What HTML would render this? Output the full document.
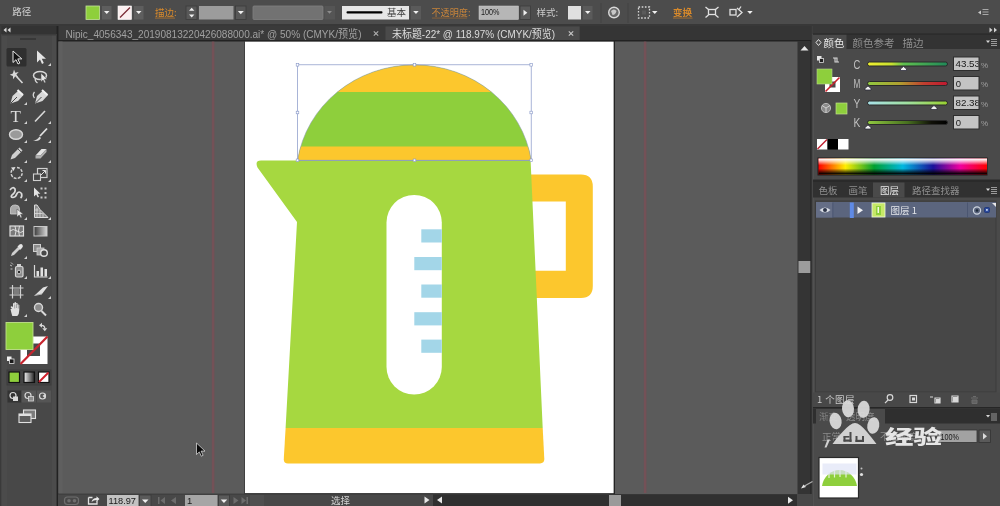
<!DOCTYPE html>
<html lang="zh-CN">
<head>
<meta charset="utf-8">
<title>Illustrator</title>
<style>
html,body{margin:0;padding:0;background:#4b4b4b;}
body{width:1000px;height:506px;overflow:hidden;position:relative;}
svg{position:absolute;left:0;top:0;display:block;will-change:transform;}
text{font-family:"Liberation Sans","Noto Sans CJK SC",sans-serif;font-size:11px;fill:#d6d6d6;}
.cj{font-family:"Noto Sans CJK SC","Liberation Sans",sans-serif;}
.or{fill:#d98a2b;}
.dk{fill:#1a1a1a;}
</style>
</head>
<body>
<svg width="1000" height="506" viewBox="0 0 1000 506">
<defs>
<linearGradient id="spec" x1="0" x2="1" y1="0" y2="0">
<stop offset="0" stop-color="#ff0000"/><stop offset="0.16" stop-color="#ffee00"/><stop offset="0.33" stop-color="#00a030"/><stop offset="0.5" stop-color="#00b8e0"/><stop offset="0.68" stop-color="#1a109a"/><stop offset="0.84" stop-color="#f000a0"/><stop offset="1" stop-color="#ff0000"/>
</linearGradient>
<linearGradient id="specv" x1="0" x2="0" y1="0" y2="1">
<stop offset="0" stop-color="#fff" stop-opacity="1"/><stop offset="0.08" stop-color="#fff" stop-opacity="0.9"/><stop offset="0.42" stop-color="#fff" stop-opacity="0"/><stop offset="0.62" stop-color="#000" stop-opacity="0"/><stop offset="0.95" stop-color="#000" stop-opacity="0.95"/><stop offset="1" stop-color="#000" stop-opacity="1"/>
</linearGradient>
</defs>
<!-- BASE -->
<g id="base">
<rect x="0" y="0" width="1000" height="506" fill="#4b4b4b"/>
<!-- canvas -->
<rect x="58" y="41" width="740" height="453" fill="#5b5b5b"/>
<!-- control bar -->
<rect x="0" y="0" width="1000" height="26" fill="#4c4c4c"/>
<!-- doc tab bar -->
<rect x="57" y="26" width="755" height="15" fill="#3a3a3a"/>
<rect x="385.5" y="26.5" width="194" height="14" fill="#4a4a4a"/><rect x="580" y="26" width="232" height="15" fill="#353535"/>
<rect x="57" y="40" width="755" height="1.5" fill="#222"/>
<!-- toolbar -->
<rect x="0" y="26" width="57" height="480" fill="#484848"/>
<rect x="0" y="26" width="57" height="8" fill="#333"/>
<rect x="52" y="35" width="5" height="471" fill="#4c4c4c"/><rect x="56.6" y="26" width="1.8" height="480" fill="#222"/><rect x="58.4" y="41.5" width="4.2" height="452" fill="#5f5f5f"/>
<!-- artboard -->
<rect x="244.6" y="41.2" width="369.6" height="452.4" fill="#fff" stroke="#2a2a2a" stroke-width="0.8"/><rect x="613.8" y="41" width="1" height="453" fill="#1c1c1c"/>
<!-- guides -->
<rect x="211.8" y="41.5" width="2.6" height="451.5" fill="#7c4e55" opacity="0.75"/>
<rect x="643.8" y="41.5" width="2.6" height="451.5" fill="#7c4e55" opacity="0.75"/>
<!-- status bar -->
<rect x="58" y="494" width="754" height="12" fill="#484848"/>
<rect x="433" y="494.3" width="364" height="11.7" fill="#303030"/>
<rect x="609" y="495" width="12" height="11" fill="#9a9a9a"/>
<!-- v scroll -->
<rect x="797.5" y="41" width="13" height="453" fill="#343434"/><rect x="810.3" y="41" width="1.5" height="453" fill="#242424"/>
<rect x="798.5" y="261" width="11.8" height="12" fill="#9c9c9c"/>
<!-- right dock -->
<rect x="812" y="26" width="188" height="480" fill="#4a4a4a"/>
<rect x="811.5" y="26" width="1.2" height="480" fill="#3a3a3a"/><rect x="812.6" y="34" width="1" height="472" fill="#565656"/>
</g>
<!-- KETTLE -->
<g id="kettle">
<path d="M520 174.5 H581 Q592.8 174.5 592.8 186.5 V286 Q592.8 298 581 298 H520 V270.8 H565.8 V201.5 H520 Z" fill="#fcc72d"/>
<path d="M261 160.5 H530.6 L542.7 428 H285.6 L297 222 L257.5 167.5 Q254.5 160.5 261 160.5 Z" fill="#a6d840"/>
<path d="M285.6 428 H542.7 L544.3 459 Q544.5 463.5 540 463.5 H288 Q283.6 463.5 283.8 459 Z" fill="#fcc72d"/>
<rect x="386.5" y="195" width="55.3" height="199.6" rx="27.6" fill="#fff"/>
<g fill="#a3d6e8">
<rect x="421.3" y="229.3" width="20.5" height="13.2"/>
<rect x="414.3" y="257" width="27.5" height="13.2"/>
<rect x="421.3" y="284.5" width="20.5" height="13.2"/>
<rect x="414.3" y="312.2" width="27.5" height="13.2"/>
<rect x="421.3" y="339.6" width="20.5" height="13.2"/>
</g>
<clipPath id="dome"><path d="M297.6 160.3 A118.1 112 0 0 1 531.2 160.3 Z"/></clipPath>
<g clip-path="url(#dome)">
<rect x="290" y="60" width="250" height="101" fill="#8ecf3c"/>
<rect x="290" y="60" width="250" height="32" fill="#fcc72d"/>
<rect x="290" y="146.5" width="250" height="14" fill="#fcc72d"/>
</g>
<path d="M297.6 160.3 A118.1 112 0 0 1 531.2 160.3 Z" fill="none" stroke="#8a9ab0" stroke-width="0.8" opacity="0.7"/>
<rect x="297.5" y="64.8" width="233.7" height="95.6" fill="none" stroke="#8494c6" stroke-width="0.7"/>
<g fill="#fff" stroke="#8494c6" stroke-width="0.6" transform="translate(0.2 0.2)">
<rect x="296" y="63.3" width="2.6" height="2.6"/><rect x="413" y="63.3" width="2.6" height="2.6"/><rect x="529.7" y="63.3" width="2.6" height="2.6"/>
<rect x="296" y="111" width="2.6" height="2.6"/><rect x="529.7" y="111" width="2.6" height="2.6"/>
<rect x="296" y="158.8" width="2.6" height="2.6"/><rect x="413" y="158.8" width="2.6" height="2.6"/><rect x="529.7" y="158.8" width="2.6" height="2.6"/>
</g>
</g>
<!--TOOLBAR-->
<g id="toolbar">
<rect x="0" y="26" width="1.500" height="480" fill="#3a3a3a"/><rect x="1.500" y="35" width="5.500" height="471" fill="#4b4b4b"/>
<path d="M6.500 27.500 l-3 2.500 l3 2.500z M10.500 27.500 l-3 2.500 l3 2.500z" fill="#d8d8d8"/>
<rect x="2" y="34" width="55" height="1.500" fill="#3c3c3c"/>
<rect x="20" y="38" width="16" height="2" fill="#383838"/>
<!-- selected tool bg -->
<rect x="6.500" y="48" width="20" height="18.500" rx="1.500" fill="#2f2f2f"/>
<!-- flyout triangles -->
<g fill="#d0d0d0">
<path d="M51 63 v3 h-3z"/>
<path d="M27 102 v3 h-3z"/><path d="M27 121 v3 h-3z M51 121 v3 h-3z"/>
<path d="M27 140 v3 h-3z M51 140 v3 h-3z"/>
<path d="M27 160 v3 h-3z M51 160 v3 h-3z"/>
<path d="M27 179 v3 h-3z M51 179 v3 h-3z"/>
<path d="M27 198 v3 h-3z"/>
<path d="M27 217 v3 h-3z M51 217 v3 h-3z"/>
<path d="M27 256 v3 h-3z"/>
<path d="M27 276 v3 h-3z M51 276 v3 h-3z"/>
<path d="M51 296 v3 h-3z"/>
<path d="M27 314 v3 h-3z"/>
</g>
<!-- row1: selection / direct selection -->
<path d="M13 51 v11.500 l3 -2.800 l2 4.300 l1.800 -0.900 l-2 -4.200 h4z" fill="#111" stroke="#e8e8e8" stroke-width="1"/>
<path d="M37 50.500 v12 l3 -3 l2 4.500 l1.800 -0.900 l-2 -4.400 h4.200z" fill="#e4e4e4"/>
<!-- row2: magic wand / lasso -->
<path d="M14 69.500 l1.300 3.200 l3.400 -0.700 l-2.300 2.600 l2 2.800 l-3.300 -0.800 l-2 2.700 l-0.200 -3.400 l-3.200 -1.200 l3.200 -1.300z" fill="#d8d8d8"/>
<path d="M16.500 76.500 l6 6.500" stroke="#d8d8d8" stroke-width="1.600"/>
<ellipse cx="40" cy="75.500" rx="6.500" ry="4" fill="none" stroke="#d8d8d8" stroke-width="1.500"/>
<path d="M35.500 78 q-1 3 2 5" fill="none" stroke="#d8d8d8" stroke-width="1.300"/>
<path d="M41 73 v9 l2 -2 l1.500 3 l1.300 -0.700 l-1.400 -3 h2.800z" fill="#e4e4e4" stroke="#484848" stroke-width="0.500"/>
<!-- row3: pen / curvature -->
<path d="M10.500 103.500 l2 -7.500 l6 -5.500 l5 4.500 l-5.500 6z" fill="#d8d8d8"/>
<path d="M11 103 l6 -6" stroke="#484848" stroke-width="1"/>
<path d="M17.500 90 l5.500 5" stroke="#f0f0f0" stroke-width="2"/>
<path d="M35 103.500 l2 -7.500 l6 -5.500 l5 4.500 l-5.500 6z" fill="#d8d8d8"/>
<path d="M35.500 103 l6 -6" stroke="#484848" stroke-width="1"/>
<path d="M42 90 l5.500 5" stroke="#f0f0f0" stroke-width="2"/>
<path d="M34.500 92 q-2.500 3 0 6" fill="none" stroke="#d8d8d8" stroke-width="1.300"/>
<!-- row4: T / line -->
<text x="10.500" y="121.500" style="font-family:'Liberation Serif',serif;font-size:17px;fill:#dcdcdc">T</text>
<path d="M35 121.500 l10 -10.500" stroke="#d8d8d8" stroke-width="1.600"/>
<!-- row5: ellipse / brush -->
<ellipse cx="16" cy="134.500" rx="6.500" ry="4.700" fill="#9a9a9a" stroke="#d8d8d8" stroke-width="1.400"/>
<path d="M47 128.500 l-7 7.500" stroke="#e0e0e0" stroke-width="1.800"/>
<path d="M33 140.500 q4 0 6.500 -4 l1.500 1.500 q-2 4 -8 2.500z" fill="#d8d8d8"/>
<!-- row6: pencil / eraser -->
<path d="M10.500 159.500 l1.500 -4.500 l7.500 -7.500 l3 3 l-7.500 7.500z" fill="#d0d0d0"/>
<path d="M18 149 l3 3" stroke="#484848" stroke-width="0.900"/>
<path d="M35.500 155.500 l6 -6.500 h5 l-6 6.500z" fill="#e4e4e4"/>
<path d="M35.500 155.500 h5 v3 h-5z M40.500 155.500 l6 -6.500 v3 l-6 6.500z" fill="#b0b0b0"/>
<!-- row7: rotate / scale -->
<path d="M12 170 a5.500 5.500 0 1 0 5 -2.500" fill="none" stroke="#d0d0d0" stroke-width="1.500" stroke-dasharray="3 1.200"/>
<path d="M11 167.500 l4.500 -0.500 l-2 4z" fill="#e0e0e0"/>
<rect x="37.500" y="168.500" width="9.500" height="9" fill="none" stroke="#d0d0d0" stroke-width="1.200"/>
<rect x="33.500" y="174" width="7" height="6.500" fill="#484848" stroke="#d0d0d0" stroke-width="1.100"/>
<path d="M41 175 l4.500 -4.500 m-3 0 h3 v3" stroke="#e0e0e0" stroke-width="1" fill="none"/>
<!-- row8: width/warp / free transform -->
<path d="M10 190 q3 -4 5 -1 q1 3 -3 6 q-2 2 1 2.500 q3 -0.500 4 -4 q2 -3 4.500 0 q1 3 -1 4.500" fill="none" stroke="#dcdcdc" stroke-width="1.700"/>
<path d="M34 187.500 v9 l2.200 -2 l1.500 3 l1.300 -0.700 l-1.400 -3 h2.800z" fill="#e4e4e4"/>
<g fill="#c8c8c8"><rect x="40.500" y="187.500" width="2" height="2"/><rect x="44.500" y="187.500" width="2" height="2"/><rect x="44.500" y="192" width="2" height="2"/><rect x="44.500" y="196.500" width="2" height="2"/><rect x="40.500" y="196.500" width="2" height="2"/></g>
<!-- row9: shape builder / perspective grid -->
<path d="M10.500 209 q0 -4 5 -4 q4 0 4 4 v5 h-9z" fill="#a8a8a8" stroke="#d0d0d0" stroke-width="0.800"/>
<path d="M17 209 v8 l2.200 -2 l1.500 3 l1.300 -0.700 l-1.400 -3 h2.800z" fill="#e8e8e8" stroke="#484848" stroke-width="0.500"/>
<path d="M34.500 205 v12.500 h13.500 l-8 -8 l-3 -4.500z" fill="#8c8c8c" stroke="#dcdcdc" stroke-width="1"/>
<path d="M37 208 v9 M40 210 v7 M43 213 v4 M34.500 210 h4 M34.500 213.500 h8" stroke="#dcdcdc" stroke-width="0.800"/>
<!-- row10: mesh / gradient -->
<rect x="10" y="226" width="13.500" height="10" fill="#7a7a7a" stroke="#dcdcdc" stroke-width="1.200"/>
<path d="M10 231 q3 -3 7 0 t6.500 0 M15 226 q2 5 0 10 M19.500 226 q-2 5 0 10" stroke="#e8e8e8" stroke-width="0.900" fill="none"/>
<linearGradient id="tg" x1="0" x2="1"><stop offset="0" stop-color="#3a3a3a"/><stop offset="1" stop-color="#d8d8d8"/></linearGradient>
<rect x="34" y="226.500" width="13" height="9.500" fill="url(#tg)" stroke="#c8c8c8" stroke-width="1"/>
<!-- row11: eyedropper / blend -->
<path d="M11 256 l1 -3 l6 -6 l2 2 l-6 6z" fill="#d0d0d0"/>
<path d="M17.500 246.500 l2 -2 q2 -1 3 0.500 q1 1.500 -0.500 3 l-2 2z" fill="#e4e4e4"/>
<rect x="33.500" y="244.500" width="7" height="7" fill="#8c8c8c" stroke="#d0d0d0" stroke-width="1"/>
<rect x="37" y="248" width="7" height="7" fill="#a8a8a8" stroke="#d0d0d0" stroke-width="0.800"/>
<circle cx="44" cy="253" r="3.300" fill="#484848" stroke="#e0e0e0" stroke-width="1.400"/>
<!-- row12: symbol sprayer / graph -->
<rect x="15.500" y="266.500" width="7.500" height="10.500" rx="1.500" fill="#8c8c8c" stroke="#d8d8d8" stroke-width="1.200"/>
<rect x="17" y="264" width="4" height="2.500" fill="#d0d0d0"/>
<circle cx="19" cy="272" r="1.800" fill="#2c2c2c" stroke="#e0e0e0" stroke-width="0.800"/>
<path d="M10 265 l2 1 M10.500 269 h2 M11 262.500 l2 2" stroke="#c0c0c0" stroke-width="1"/>
<path d="M34.500 265 v12 h13" fill="none" stroke="#d8d8d8" stroke-width="1.200"/>
<rect x="36.500" y="271" width="2.500" height="5.500" fill="#e0e0e0"/><rect x="40.500" y="267.500" width="2.500" height="9" fill="#e0e0e0"/><rect x="44.500" y="269" width="2.500" height="7.500" fill="#e0e0e0"/>
<!-- row13: artboard / slice -->
<path d="M9.500 288 h14 M9.500 295 h14 M12.500 285 v13.500 M20.500 285 v13.500" stroke="#d0d0d0" stroke-width="1.200" fill="none"/>
<rect x="13.500" y="289" width="6" height="5" fill="#7c7c7c"/>
<path d="M34.500 295.500 l8.500 -8 l5 -1.500 l-6 8z" fill="#e0e0e0"/>
<path d="M34.500 295.500 l7.500 -1.500" stroke="#b0b0b0" stroke-width="1"/>
<!-- row14: hand / zoom -->
<path d="M12 309 l-1.500 -2 q1 -1.500 2.500 0 v-3.500 q0.800 -1 1.500 0 v-1 q0.800 -1 1.600 0 v1 q0.800 -1 1.600 0 v1.500 q0.800 -1 1.600 0 v5 q0 4 -2 6 h-5 q-1 -3 -1.800 -7z" fill="#e0e0e0"/>
<path d="M14.700 304.500 v4 M16.500 304 v4 M18.300 304.500 v4" stroke="#7a7a7a" stroke-width="0.600"/>
<circle cx="38.500" cy="307.500" r="4" fill="#8c8c8c" stroke="#d8d8d8" stroke-width="1.400"/>
<path d="M41.500 311 l4.500 4.500" stroke="#d8d8d8" stroke-width="2"/>
<!-- fill/stroke -->
<rect x="20.500" y="336.500" width="27" height="27.500" fill="#fff"/>
<rect x="33" y="344" width="6.500" height="11" fill="#484848"/>
<rect x="27" y="343.500" width="13" height="12.500" fill="#484848"/>
<path d="M20.500 364 L47.500 336.500" stroke="#c8242e" stroke-width="2.200"/>
<rect x="6" y="322.500" width="27" height="27" fill="#8ecf3c" stroke="#bfe08a" stroke-width="0.900"/>
<path d="M41.500 325.300 q3.300 0 3.300 3.300" fill="none" stroke="#d8d8d8" stroke-width="1.300"/><path d="M42 322.800 v5 l-3 -2.500z M42.300 328.300 h5 l-2.500 3z" fill="#d8d8d8"/>
<rect x="7" y="356.500" width="4.500" height="4.500" fill="#f0f0f0"/>
<rect x="9.500" y="359" width="4.500" height="4.500" fill="#1a1a1a" stroke="#e0e0e0" stroke-width="0.800"/>
<!-- color mode buttons -->
<rect x="7" y="370" width="44" height="15" fill="#444" stroke="#3a3a3a" stroke-width="0.800"/>
<rect x="9" y="372" width="10.500" height="10.500" fill="#8ecf3c" stroke="#111" stroke-width="1.200"/>
<linearGradient id="bw" x1="0" x2="1"><stop offset="0" stop-color="#f4f4f4"/><stop offset="1" stop-color="#222"/></linearGradient>
<rect x="24" y="372" width="10.500" height="10.500" fill="url(#bw)" stroke="#111" stroke-width="1.200"/>
<rect x="38.500" y="372" width="10.500" height="10.500" fill="#fff" stroke="#111" stroke-width="1.200"/>
<path d="M39 382 L48.500 372.500" stroke="#d0202c" stroke-width="2"/>
<!-- draw modes -->
<rect x="7.500" y="390.500" width="14" height="12" fill="#333"/>
<rect x="21.500" y="390.500" width="29.500" height="12" fill="#555"/>
<rect x="36" y="390.500" width="0.800" height="12" fill="#444"/>
<g fill="none" stroke="#d8d8d8" stroke-width="1.200">
<circle cx="13" cy="395.500" r="3"/><circle cx="28" cy="395.500" r="3"/><circle cx="42.500" cy="396" r="3"/>
</g>
<rect x="13" y="396.500" width="5" height="4.500" fill="#d8d8d8"/>
<rect x="28.500" y="396.500" width="5" height="4.500" fill="#8c8c8c" stroke="#d8d8d8" stroke-width="0.800"/>
<path d="M42.500 396 l3 -2.500 v5z" fill="#d8d8d8"/>
<!-- screen mode -->
<rect x="23.500" y="410" width="12" height="8.500" fill="#7c7c7c" stroke="#e0e0e0" stroke-width="1.100"/>
<rect x="19" y="414" width="12" height="8.500" fill="#5c5c5c" stroke="#e0e0e0" stroke-width="1.100"/>
<rect x="19" y="414" width="12" height="2" fill="#e0e0e0"/>
</g>
<!--/TOOLBAR-->
<!--CONTROL-->
<g id="control">
<rect x="0" y="24" width="1000" height="2" fill="#383838"/>
<text x="12.3" y="14.8" class="cj" style="font-size:9.5px;fill:#d0d0d0">路径</text>
<!-- fill swatch -->
<rect x="86" y="6" width="13.500" height="13.500" fill="#8ecf3c" stroke="#c4e49a" stroke-width="0.800"/>
<rect x="102" y="6" width="9.500" height="13.500" fill="#5e5e5e"/>
<path d="M104 11 h5.500 l-2.750 3z" fill="#f0f0f0"/>
<!-- stroke swatch -->
<rect x="118" y="6" width="13.500" height="13.500" fill="#fbeff0" stroke="#fff" stroke-width="0.600"/>
<path d="M120 17.500 L130 7.500" stroke="#7a2a34" stroke-width="1.200"/>
<rect x="134" y="6" width="9.500" height="13.500" fill="#5e5e5e"/>
<path d="M136 11 h5.500 l-2.750 3z" fill="#f0f0f0"/>
<text x="155" y="15.8" class="cj or" style="font-size:9.5px">描边:</text>
<rect x="155" y="17.6" width="20" height="0.900" fill="#a87030"/>
<!-- spinner -->
<rect x="186" y="6" width="11" height="13.500" fill="#585858" stroke="#3c3c3c" stroke-width="0.800"/>
<path d="M189 10.800 l2.700 -3 l2.700 3z M189 14.500 l2.700 3 l2.700 -3z" fill="#f0f0f0"/>
<rect x="199" y="6" width="34.500" height="13.500" fill="#9c9c9c"/>
<rect x="235.500" y="6" width="10.500" height="13.500" fill="#585858" stroke="#3c3c3c" stroke-width="0.800"/>
<path d="M237.800 11 h6 l-3 3.200z" fill="#f0f0f0"/>
<!-- profile -->
<rect x="253" y="6" width="70" height="13.500" rx="1" fill="#727272" stroke="#808080" stroke-width="0.800"/>
<rect x="324.500" y="6" width="10.500" height="13.500" fill="#555"/>
<path d="M327 11 h5 l-2.500 2.800z" fill="#8c8c8c"/>
<!-- stroke style -->
<rect x="342" y="6" width="67" height="13.500" fill="#e6e6e6"/>
<rect x="346.500" y="11.200" width="36" height="2.200" rx="1" fill="#000"/>
<text x="387" y="15.8" class="cj" style="font-size:9.5px;fill:#3a3a3a">基本</text>
<rect x="411" y="6" width="10" height="13.500" fill="#5a5a5a"/>
<path d="M413.200 11 h5.500 l-2.750 3z" fill="#f0f0f0"/>
<text x="431.5" y="15.8" class="cj" style="font-size:9.5px;fill:#c8843a" textLength="39" lengthAdjust="spacingAndGlyphs">不透明度:</text>
<rect x="432" y="17.6" width="35" height="0.900" fill="#8c6238"/>
<rect x="479" y="6" width="39.500" height="13.500" fill="#b6b6b6" stroke="#d0d0d0" stroke-width="0.500"/>
<text x="481" y="15.2" class="dk" style="font-size:9.5px" textLength="18.5" lengthAdjust="spacingAndGlyphs">100%</text>
<rect x="520" y="6" width="10.500" height="13.500" fill="#5a5a5a" stroke="#3c3c3c" stroke-width="0.800"/>
<path d="M523.500 9.800 l3.800 3 l-3.800 3z" fill="#f0f0f0"/>
<text x="536.5" y="15.8" class="cj" style="font-size:9.5px;fill:#cacaca">样式:</text>
<rect x="568" y="6" width="13" height="13.500" fill="#e0e0e0"/>
<rect x="583" y="6" width="9.500" height="13.500" fill="#5a5a5a"/>
<path d="M585 11 h5.500 l-2.750 3z" fill="#f0f0f0"/>
<rect x="600.500" y="3" width="1" height="20" fill="#424242"/>
<circle cx="614" cy="12.500" r="5.300" fill="#6a6a6a" stroke="#d8d8d8" stroke-width="1.400"/>
<path d="M611 11 q3 -3 5.500 0 q-1 4 -4 4z" fill="#c8c8c8"/>
<rect x="627.500" y="3" width="1" height="20" fill="#424242"/>
<rect x="638.500" y="7" width="11" height="11" fill="none" stroke="#d8d8d8" stroke-width="1.300" stroke-dasharray="1.600 1.600"/>
<rect x="642" y="10.500" width="4" height="4" fill="#5a5a5a"/>
<path d="M652 11 h5.500 l-2.750 3z" fill="#f0f0f0"/>
<text x="673" y="15.8" class="cj or" style="font-size:9.5px;font-weight:bold">变换</text>
<rect x="673" y="17.6" width="19.5" height="0.900" fill="#a87030"/>
<g stroke="#e0e0e0" stroke-width="1.300" fill="none">
<rect x="708.500" y="9.500" width="7" height="5"/>
<path d="M705.500 7 l3 2.500 M718.500 7 l-3 2.500 M705.500 17.500 l3 -2.500 M718.500 17.500 l-3 -2.500"/>
<rect x="730" y="9.500" width="6" height="5.500"/>
<path d="M737 8 l5 4.500 l-5 4.500 M741 6.500 l-2 3"/>
</g>
<path d="M747.200 11 h5.500 l-2.750 3z" fill="#f0f0f0"/>
<path d="M978 12.500 l3 -2 v4z" fill="#c8c8c8"/><path d="M982.500 9.500h6M982.500 12h6M982.500 14.500h6" stroke="#a8a8a8" stroke-width="1"/>
</g>
<!--/CONTROL-->
<!--TABS-->
<g id="tabs">
<text x="65.500" y="38" style="font-size:11px;fill:#a0a0a0" textLength="296" lengthAdjust="spacingAndGlyphs">Nipic_4056343_20190813220426088000.ai* @ 50% (CMYK/<tspan class="cj">预览</tspan>)</text>
<path d="M373.800 31.300 l4.400 4.400 M378.200 31.300 l-4.400 4.400" stroke="#b0b0b0" stroke-width="1.100"/>
<text x="392" y="38" style="font-size:11px;fill:#dcdcdc" textLength="163" lengthAdjust="spacingAndGlyphs"><tspan class="cj">未标题</tspan>-22* @ 118.97% (CMYK/<tspan class="cj">预览</tspan>)</text>
<path d="M568.800 31.300 l4.400 4.400 M573.200 31.300 l-4.400 4.400" stroke="#c8c8c8" stroke-width="1.100"/>
</g>
<!--/TABS-->
<!--STATUS-->
<g id="status">
<rect x="58" y="493.6" width="375" height="1" fill="#3c3c3c"/>
<rect x="64.500" y="497" width="14" height="7.500" rx="3" fill="none" stroke="#6e6e6e" stroke-width="1.200"/>
<circle cx="69" cy="500.800" r="1.800" fill="#6e6e6e"/><circle cx="74.500" cy="500.800" r="1.800" fill="#6e6e6e"/>
<path d="M88.500 497.500 h4 M88.500 497.500 v6.500 h8.500 v-3" stroke="#e0e0e0" stroke-width="1.300" fill="none"/>
<path d="M91.500 502 q1 -4 5 -4 v-1.800 l3 2.800 l-3 2.800 v-1.800 q-3 0 -5 2z" fill="#e8e8e8"/>
<rect x="107" y="495" width="31.500" height="11.5" fill="#c2c2c2"/>
<text x="108.5" y="504" class="dk" style="font-size:9.5px" textLength="27.5" lengthAdjust="spacingAndGlyphs">118.97</text>
<rect x="139.500" y="495" width="11.500" height="11.5" fill="#5a5a5a" stroke="#3a3a3a" stroke-width="0.800"/>
<path d="M142 499.500 h6.500 l-3.250 3.500z" fill="#f0f0f0"/>
<g fill="#6c6c6c">
<rect x="158" y="497" width="1.500" height="7"/><path d="M165 497 v7 l-4.500 -3.500z"/>
<path d="M176 497 v7 l-5 -3.500z"/>
<path d="M233.500 497 v7 l5 -3.500z"/>
<path d="M241.500 497 v7 l4.500 -3.500z"/><rect x="246.500" y="497" width="1.500" height="7"/>
</g>
<rect x="185" y="495" width="32.500" height="11.5" fill="#a6a6a6"/>
<text x="187" y="504" class="dk" style="font-size:9.5px">1</text>
<rect x="218.500" y="495" width="11" height="11.5" fill="#5a5a5a" stroke="#3a3a3a" stroke-width="0.800"/>
<path d="M220.700 499.500 h6.500 l-3.250 3.500z" fill="#f0f0f0"/>
<rect x="250" y="495" width="14" height="11.5" fill="#4f4f4f"/>
<text x="331" y="504" class="cj" style="font-size:9.5px;fill:#d4d4d4">选择</text>
<path d="M424.500 496.500 v7 l5 -3.500z" fill="#e8e8e8"/>
<path d="M442 496.500 v7 l-5 -3.500z" fill="#e8e8e8"/>
<path d="M800.500 50.5 l4 -4.500 l4 4.500z" fill="#e8e8e8"/>
<path d="M788 496.800 v7 l5 -3.500z" fill="#e8e8e8"/>
<rect x="797.500" y="494" width="14.500" height="12" fill="#484848"/>
</g>
<!--/STATUS-->
<!--PANELS-->
<g id="panels">
<!-- dock header -->
<rect x="813" y="26" width="187" height="8" fill="#383838"/>
<path d="M989.5 27.5 l3 2.5 l-3 2.5z M994 27.5 l3 2.5 l-3 2.5z" fill="#d0d0d0"/>
<!-- color panel -->
<rect x="813" y="34" width="187" height="15" fill="#333"/>
<rect x="813" y="34.5" width="33.5" height="15" fill="#4a4a4a"/>
<rect x="813" y="33.5" width="187" height="1" fill="#262626"/>
<path d="M818.5 39.5 l2.5 3 l-2.500 3 l-2.500 -3z" fill="none" stroke="#e0e0e0" stroke-width="1"/>
<text x="823.5" y="46.5" class="cj" style="font-size:10.5px;fill:#e8e8e8">颜色</text>
<text x="852.5" y="46.5" class="cj" style="font-size:10.5px;fill:#8f8f8f">颜色参考</text>
<text x="902.5" y="46.5" class="cj" style="font-size:10.5px;fill:#8f8f8f">描边</text>
<path d="M986 40.500 h4 l-2 2.500z" fill="#d8d8d8"/><path d="M991 39.5h6M991 41.500h6M991 43.500h6M991 45.5h6" stroke="#9a9a9a" stroke-width="1"/>
<!-- small icons -->
<rect x="817" y="56" width="4.500" height="4.500" fill="#e8e8e8"/><rect x="819.5" y="58.500" width="4" height="4" fill="#222" stroke="#ddd" stroke-width="0.800"/>
<path d="M833 58 h4 v4 M839 62 h-4 v-4" fill="none" stroke="#d8d8d8" stroke-width="1.100"/>
<!-- fill/stroke -->
<rect x="825" y="77" width="15" height="15" fill="#fff"/>
<rect x="829.5" y="81.500" width="6" height="6" fill="#4a4a4a"/>
<path d="M825.500 91.500 L839.500 77.500" stroke="#c8202a" stroke-width="1.600"/>
<rect x="817" y="69" width="15" height="15" fill="#8ecf3c" stroke="#b8d890" stroke-width="0.600"/>
<circle cx="826" cy="108" r="4.600" fill="#8a8a8a" stroke="#b8b8b8" stroke-width="1"/>
<path d="M826 108 v4.500 M826 108 l-4 -2.500 M826 108 l4 -2.500" stroke="#d8d8d8" stroke-width="0.900" fill="none"/>
<rect x="836" y="103" width="11" height="11" fill="#8ecf3c" stroke="#c0dc8c" stroke-width="0.700"/>
<!-- sliders -->
<text x="853.5" y="68.8" style="font-size:12.5px;fill:#c0c0c0" textLength="6.8" lengthAdjust="spacingAndGlyphs">C</text>
<text x="853.5" y="88.3" style="font-size:12.5px;fill:#c0c0c0" textLength="6.8" lengthAdjust="spacingAndGlyphs">M</text>
<text x="853.5" y="107.8" style="font-size:12.5px;fill:#c0c0c0" textLength="6.8" lengthAdjust="spacingAndGlyphs">Y</text>
<text x="853.5" y="127.3" style="font-size:12.5px;fill:#c0c0c0" textLength="6.8" lengthAdjust="spacingAndGlyphs">K</text>
<linearGradient id="gc" x1="0" x2="1"><stop offset="0" stop-color="#f0f030"/><stop offset="0.300" stop-color="#c8e030"/><stop offset="0.450" stop-color="#60c050"/><stop offset="1" stop-color="#208858"/></linearGradient>
<linearGradient id="gm" x1="0" x2="1"><stop offset="0" stop-color="#90c840"/><stop offset="0.400" stop-color="#b0a030"/><stop offset="0.700" stop-color="#c04030"/><stop offset="1" stop-color="#c01830"/></linearGradient>
<linearGradient id="gy" x1="0" x2="1"><stop offset="0" stop-color="#a8e0e8"/><stop offset="0.500" stop-color="#a0e0a0"/><stop offset="1" stop-color="#98d030"/></linearGradient>
<linearGradient id="gk" x1="0" x2="1"><stop offset="0" stop-color="#90c840"/><stop offset="0.500" stop-color="#487020"/><stop offset="0.800" stop-color="#101008"/><stop offset="1" stop-color="#000"/></linearGradient>
<g stroke="#2a2a2a" stroke-width="1">
<rect x="867.5" y="62" width="80" height="4" rx="2" fill="url(#gc)"/>
<rect x="867.5" y="81.500" width="80" height="4" rx="2" fill="url(#gm)"/>
<rect x="867.5" y="101" width="80" height="4" rx="2" fill="url(#gy)"/>
<rect x="867.5" y="120.500" width="80" height="4" rx="2" fill="url(#gk)"/>
</g>
<g fill="#f0f0f0" stroke="#223" stroke-width="0.700">
<path d="M903.500 66.500 l3 2.500 v1.500 h-6 v-1.500z"/>
<path d="M868 86 l3 2.500 v1.500 h-6 v-1.500z"/>
<path d="M934 105.500 l3 2.500 v1.500 h-6 v-1.500z"/>
<path d="M868 125 l3 2.500 v1.500 h-6 v-1.500z"/>
</g>
<g fill="#c4c4c4" stroke="#2e2e2e" stroke-width="1">
<rect x="953.5" y="57" width="25.500" height="13.500"/>
<rect x="953.5" y="76.500" width="25.500" height="13.500"/>
<rect x="953.5" y="96" width="25.500" height="13.500"/>
<rect x="953.5" y="115.500" width="25.500" height="13.500"/>
</g>
<clipPath id="inp"><rect x="954" y="56" width="24.500" height="75"/></clipPath>
<g clip-path="url(#inp)" style="font-size:10.500px">
<text x="955.5" y="67.3" class="dk" style="font-size:9.5px" textLength="24.5" lengthAdjust="spacingAndGlyphs">43.53</text>
<text x="955.8" y="86.8" class="dk" style="font-size:9.5px">0</text>
<text x="955.5" y="106.3" class="dk" style="font-size:9.5px" textLength="24.5" lengthAdjust="spacingAndGlyphs">82.38</text>
<text x="955.8" y="125.8" class="dk" style="font-size:9.5px">0</text>
</g>
<g>
<text x="981" y="67.500" style="font-size:8px;fill:#a0a0a0">%</text><text x="981" y="87" style="font-size:8px;fill:#a0a0a0">%</text><text x="981" y="106.500" style="font-size:8px;fill:#a0a0a0">%</text><text x="981" y="126" style="font-size:8px;fill:#a0a0a0">%</text>
</g>
<!-- none/black/white -->
<rect x="817" y="139" width="10.500" height="10.500" fill="#fff"/>
<path d="M817.500 149 L827 139.500" stroke="#c02030" stroke-width="1.400"/>
<rect x="827.5" y="139" width="10.500" height="10.500" fill="#000"/>
<rect x="838" y="139" width="10.500" height="10.500" fill="#fff"/>
<!-- spectrum -->
<rect x="817.500" y="157.500" width="170" height="18" fill="#1c1c1c"/>
<rect x="818.500" y="158.500" width="168.500" height="16" fill="url(#spec)"/>
<rect x="818.500" y="158.500" width="168.500" height="16" fill="url(#specv)"/>
<!-- separator -->
<rect x="813" y="179.500" width="187" height="2.500" fill="#2a2a2a"/>
<!-- layers panel -->
<rect x="813" y="182" width="187" height="15.500" fill="#313131"/>
<rect x="873" y="182.500" width="31.500" height="15" fill="#4a4a4a"/>
<text x="818.5" y="193.800" class="cj" style="font-size:9.5px;fill:#8f8f8f">色板</text>
<text x="848.5" y="193.800" class="cj" style="font-size:9.5px;fill:#8f8f8f">画笔</text>
<text x="880" y="193.800" class="cj" style="font-size:9.5px;fill:#e8e8e8">图层</text>
<text x="912" y="193.800" class="cj" style="font-size:9.5px;fill:#8f8f8f">路径查找器</text>
<path d="M986 188.500 h4 l-2 2.500z" fill="#d8d8d8"/><path d="M991 187.500h6M991 189.500h6M991 191.500h6M991 193.500h6" stroke="#9a9a9a" stroke-width="1"/>
<!-- layers body -->
<rect x="815.500" y="201" width="180.500" height="191" fill="#474747" stroke="#3c3c3c" stroke-width="1"/>
<rect x="816" y="202" width="180" height="15.500" fill="#5b657e"/>
<rect x="816" y="202" width="16.500" height="15.500" fill="#656e86"/>
<rect x="832.500" y="202.500" width="0.800" height="15.500" fill="#48536e"/>
<rect x="849.800" y="202.500" width="4" height="15.500" fill="#5f8ae6"/>
<rect x="967" y="202.500" width="0.800" height="15.500" fill="#48536e"/>
<path d="M819.500 210 q5.500 -5 11 0 q-5.500 5 -11 0z" fill="#d8dce4"/><circle cx="825" cy="210" r="2" fill="#2c3448"/>
<path d="M857.500 206.500 l5.500 3.800 l-5.500 3.800z" fill="#eef0f4"/>
<rect x="872" y="203" width="13" height="14" fill="#c6e868" stroke="#f0f8e0" stroke-width="0.800"/>
<rect x="876" y="206" width="5" height="9" fill="#8ecf3c"/><rect x="877.500" y="207" width="1.500" height="6" fill="#f4fbe0"/>
<text x="890.5" y="213.800" class="cj" style="font-size:9.5px;fill:#e4e6ea">图层 1</text>
<circle cx="977" cy="210.500" r="3.600" fill="none" stroke="#cfd6e0" stroke-width="1.200"/><circle cx="977" cy="210.500" r="1.300" fill="#1c2a38"/>
<rect x="984.500" y="207.500" width="5" height="5" rx="1" fill="#2c4a9c" stroke="#1c3478" stroke-width="0.800"/><rect x="986" y="209" width="1.800" height="1.800" fill="#c0d0f0"/>
<path d="M992 203 h4 v4z" fill="#e8e8e8"/>
<!-- layers footer -->
<rect x="813" y="392.500" width="187" height="15" fill="#484848"/>
<text x="817" y="403.300" class="cj" style="font-size:9.5px;fill:#c8c8c8" textLength="37.5" lengthAdjust="spacing">1 个图层</text>
<g fill="none" stroke="#d8d8d8" stroke-width="1.200">
<circle cx="890" cy="397.500" r="2.800"/><path d="M888 400 l-3 3.200"/>
<rect x="910" y="395.500" width="6.500" height="7"/>
<path d="M930 397 h3 M935 398 h5 v5 h-5z"/>
<path d="M952 396 h6 v6 h-6z"/>
</g>
<rect x="912" y="397.500" width="3" height="3" fill="#d8d8d8"/><rect x="936" y="399" width="4" height="4" fill="#d8d8d8"/><rect x="953" y="397" width="5" height="5" fill="#d8d8d8"/>
<path d="M971 398 h7 M972 400 h5 v3.500 h-5z M973 396.500 h3" stroke="#6c6c6c" stroke-width="1" fill="#626262"/>
<rect x="813" y="407" width="187" height="1.500" fill="#262626"/>
<!-- third panel -->
<rect x="813" y="408.500" width="187" height="15" fill="#2f2f2f"/>
<rect x="816" y="409" width="69" height="15" fill="#4a4a4a"/>
<text x="819" y="420" class="cj" style="font-size:9.5px;fill:#7c7c7c">渐变</text>
<text x="846" y="420" class="cj" style="font-size:9.5px;fill:#8c8c8c">透明度</text>
<path d="M986 415 h4 l-2 2.500z" fill="#d8d8d8"/><path d="M991 414h6M991 416h6M991 418h6M991 420h6" stroke="#9a9a9a" stroke-width="1"/>
<text x="822" y="440" class="cj" style="font-size:9.5px;fill:#8c8c8c">正常</text>
<text x="880" y="440" class="cj" style="font-size:9.5px;fill:#8c8c8c">不透明度:</text>
<rect x="938" y="430" width="39" height="12.500" fill="#a2a2a2" stroke="#333" stroke-width="0.800"/>
<text x="940.5" y="439.800" class="dk" style="font-size:9.5px" textLength="18.5" lengthAdjust="spacingAndGlyphs">100%</text>
<rect x="979" y="430" width="11.500" height="12.500" fill="#5a5a5a" stroke="#333" stroke-width="0.800"/>
<path d="M983 433 l4 3.200 l-4 3.200z" fill="#dcdcdc"/>
<!-- thumbnail -->
<rect x="819" y="457.500" width="39.500" height="40.500" fill="#fff" stroke="#2a2a2a" stroke-width="1.200"/>
<path d="M822 486 A17.800 19.500 0 0 1 857 486 Z" fill="#8ecf3c"/>
<path d="M829 472 v6 M834.500 470.500 v7 M840 470 v7 M846 471 v6.500" stroke="#f4f8ec" stroke-width="1.200" opacity="0.850"/>
<rect x="822.500" y="463.500" width="34" height="11" fill="#dfe4f6" opacity="0.700"/>
<circle cx="861.500" cy="474.500" r="1.600" fill="#e0e0e0"/><circle cx="861.500" cy="468.500" r="1" fill="#c0c0c0"/>
</g>
<!--/PANELS-->
<!--OVERLAY-->
<g id="overlay">
<!-- mouse cursor -->
<path d="M196.500 443 v11.500 l2.800 -2.600 l2 4.300 l1.800 -0.900 l-2 -4.200 h3.900z" fill="#0a0a0a" stroke="#e8e8e8" stroke-width="0.700"/>
<!-- small arrow near dock -->
<path d="M801 488.500 l2.500 -4 l2.500 2.500z" fill="#e8e8e8"/><path d="M804.500 486 l8 -4.500" stroke="#b0b0b0" stroke-width="1.200"/>
<!-- watermark -->
<g fill="#dcdcdc" opacity="0.930">
<ellipse cx="835.600" cy="421" rx="6" ry="8.300" transform="rotate(-10 835.600 421)"/>
<ellipse cx="848" cy="408.700" rx="6" ry="8.500" transform="rotate(-4 848 408.700)"/>
<ellipse cx="863.600" cy="409.300" rx="6" ry="8.500" transform="rotate(5 863.600 409.300)"/>
<ellipse cx="873.300" cy="425.500" rx="6" ry="8.300" transform="rotate(10 873.300 425.500)"/>
<path d="M832.500 444 q4 -6 10 -12 q8 -9 12.500 -9 q4.500 0 12 9 q5 6 9.500 12 z"/>
<path d="M824.500 447.500 l3 -8 l2.500 0 l-3.500 8z"/>
</g>
<g fill="#4a4a4a">
<rect x="849.500" y="432" width="2" height="10"/><rect x="843.500" y="439.500" width="8" height="2.200"/><rect x="843.500" y="436.500" width="2" height="5"/><rect x="843.500" y="436" width="6" height="1.600"/>
<rect x="855.500" y="436" width="2" height="6"/><rect x="862" y="436" width="2" height="6"/><rect x="855.500" y="439.800" width="8.500" height="2.200"/>
</g>
<text x="885" y="443.500" class="cj" style="font-size:19.500px;font-weight:900;fill:#e6e6e6" textLength="57" lengthAdjust="spacingAndGlyphs">经验</text>
</g>
<!--/OVERLAY-->
</svg>
</body>
</html>
